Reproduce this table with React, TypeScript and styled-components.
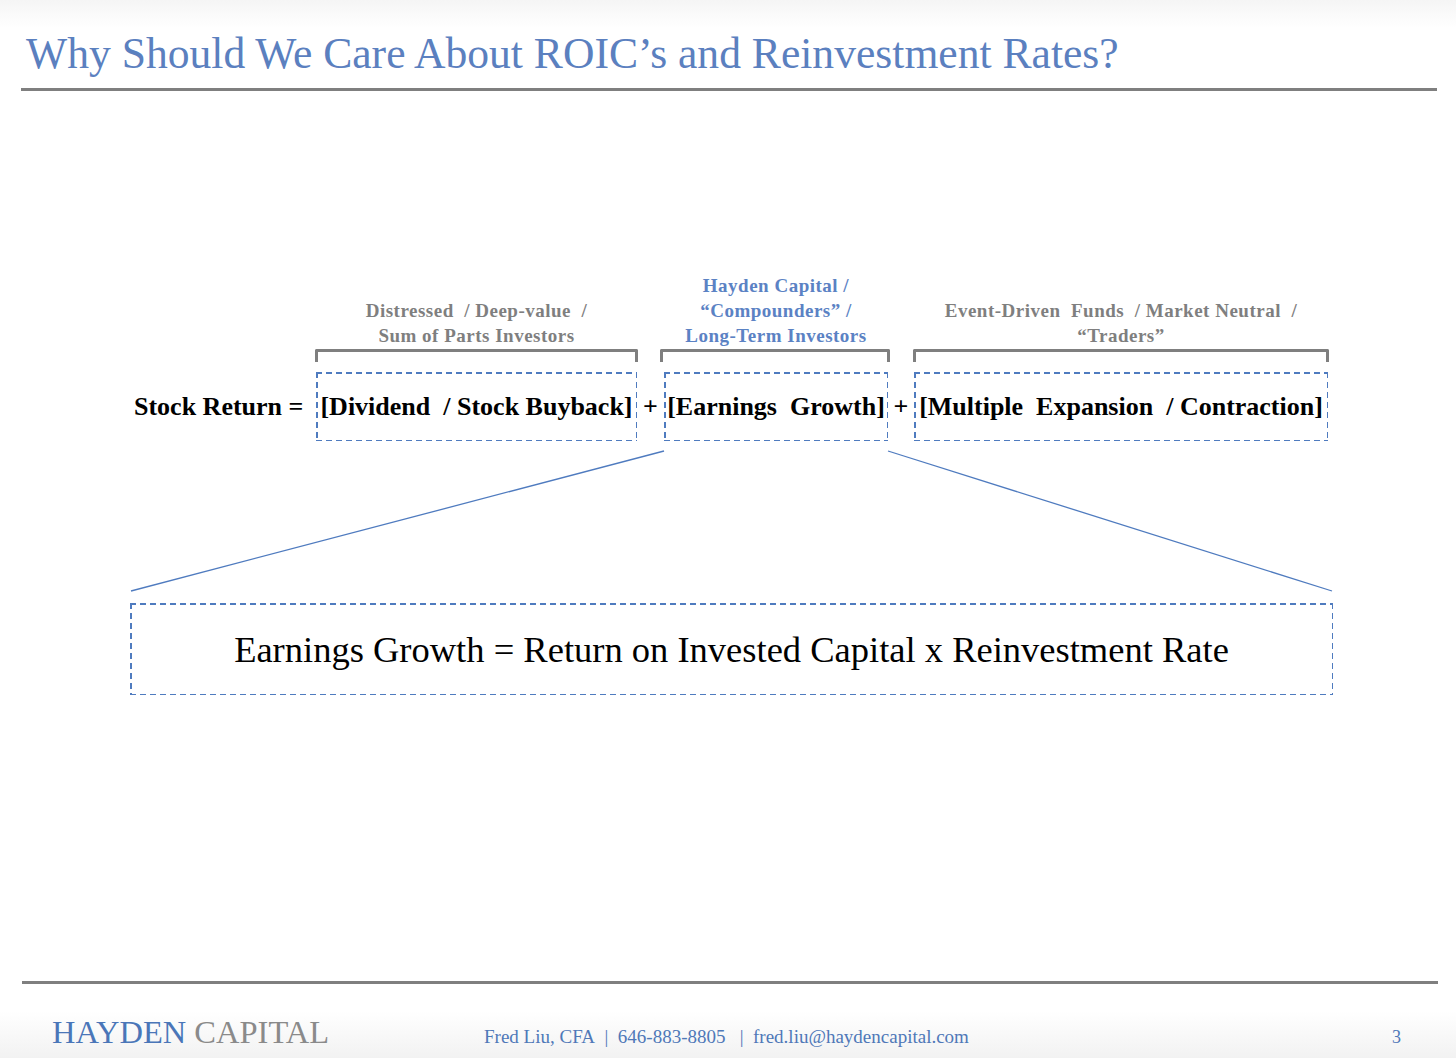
import React from 'react';
import styled, {createGlobalStyle, css} from 'styled-components';

const blue = '#5b80bf';
const dashBlue = '#4f7bbf';
const gray = '#7f7f7f';
const serif = `"Liberation Serif", "Times New Roman", serif`;

const GlobalStyle = createGlobalStyle`
  html, body {
    margin: 0;
    padding: 0;
    background: #fff;
  }
  body {
    font-family: ${serif};
    color: #000;
  }
`;

const dashed = css`
  background:
    linear-gradient(to right, ${dashBlue} 60%, transparent 0) top left / 10px 1.5px repeat-x,
    linear-gradient(to right, ${dashBlue} 60%, transparent 0) bottom left / 10px 1.5px repeat-x,
    linear-gradient(to bottom, ${dashBlue} 60%, transparent 0) top left / 1.5px 10px repeat-y,
    linear-gradient(to bottom, ${dashBlue} 60%, transparent 0) top right / 1.5px 10px repeat-y;
`;

function App() {
    return (
        <Page>
            <GlobalStyle/>
            <Header>
                <Title>Why Should We Care About ROIC’s and Reinvestment Rates?</Title>
                <Rule/>
            </Header>
            <Main>
                <Diagram>
                    <Label $col={2} $blue={false}>Distressed&nbsp; / Deep-value&nbsp; /<br/>Sum of Parts Investors</Label>
                    <Label $col={4} $blue>Hayden Capital /<br/>“Compounders” /<br/>Long-Term Investors</Label>
                    <Label $col={6} $blue={false}>Event-Driven&nbsp; Funds&nbsp; / Market Neutral&nbsp; /<br/>“Traders”</Label>

                    <Bracket $col={2}/>
                    <Bracket $col={4} $wide/>
                    <Bracket $col={6}/>

                    <Lead>Stock Return =</Lead>
                    <Term $col={2}>[Dividend&nbsp; / Stock Buyback]</Term>
                    <Plus $col={3}>+</Plus>
                    <Term $col={4}>[Earnings&nbsp; Growth]</Term>
                    <Plus $col={5}>+</Plus>
                    <Term $col={6}>[Multiple&nbsp; Expansion&nbsp; / Contraction]</Term>
                </Diagram>
                <Connector viewBox="0 0 1456 162" width="1456" height="162">
                    <line x1="664" y1="10" x2="131" y2="150" stroke={dashBlue} strokeWidth="1.3"/>
                    <line x1="888" y1="10" x2="1332" y2="150" stroke={dashBlue} strokeWidth="1.3"/>
                </Connector>
                <Formula>Earnings Growth = Return on Invested Capital x Reinvestment Rate</Formula>
            </Main>
            <Footer>
                <Rule/>
                <FooterRow>
                    <Logo><LogoBlue>HAYDEN</LogoBlue> <LogoGray>CAPITAL</LogoGray></Logo>
                    <Contact>Fred Liu, CFA&nbsp; |&nbsp; 646-883-8805&nbsp;&nbsp; |&nbsp; fred.liu@haydencapital.com</Contact>
                    <PageNum>3</PageNum>
                </FooterRow>
            </Footer>
        </Page>
    );
}

export default App;

const Page = styled.div`
  width: 1456px;
  height: 1058px;
  display: flex;
  flex-direction: column;
  overflow: hidden;
  background: linear-gradient(#f5f5f5, #fff 28px);
`

const Header = styled.header`
  padding: 31px 19px 0 21px;
`

const Title = styled.h1`
  margin: 0 0 13px 5px;
  font-family: ${serif};
  font-weight: 400;
  font-size: 43.6px;
  line-height: 44px;
  color: ${blue};
  white-space: nowrap;
`

const Rule = styled.div`
  height: 3px;
  background: ${gray};
`

const Main = styled.main`
  flex: 1;
  padding-top: 182px;
  display: flex;
  flex-direction: column;
`

const Diagram = styled.div`
  margin-left: 134px;
  display: grid;
  grid-template-columns: 182px 321px 27px 224px 26px 414px;
  grid-template-rows: auto 13px 79px;
`

const Label = styled.div<{ $col: number; $blue: boolean }>`
  grid-column: ${p => p.$col};
  grid-row: 1;
  align-self: end;
  margin: 0 -80px 1px;
  text-align: center;
  font-size: 19px;
  font-weight: 700;
  letter-spacing: 0.5px;
  line-height: 25px;
  color: ${p => (p.$blue ? '#5b82c4' : gray)};
  white-space: nowrap;
`

const Bracket = styled.div<{ $col: number; $wide?: boolean }>`
  grid-column: ${p => p.$col};
  grid-row: 2;
  margin: ${p => (p.$wide ? '0 -2px 0 -4px' : '0 -1px')};
  border: 3px solid ${gray};
  border-bottom: none;
  border-radius: 2px 2px 0 0;
`

const Lead = styled.div`
  grid-column: 1;
  grid-row: 3;
  margin-top: 10px;
  display: flex;
  align-items: center;
  font-size: 26px;
  font-weight: 700;
  white-space: nowrap;
`

const Term = styled.div<{ $col: number }>`
  grid-column: ${p => p.$col};
  grid-row: 3;
  margin-top: 10px;
  display: flex;
  align-items: center;
  justify-content: center;
  font-size: 26px;
  font-weight: 700;
  white-space: nowrap;
  ${dashed};
`

const Plus = styled.div<{ $col: number }>`
  grid-column: ${p => p.$col};
  grid-row: 3;
  margin-top: 10px;
  display: flex;
  align-items: center;
  justify-content: center;
  font-size: 26px;
  font-weight: 700;
`

const Connector = styled.svg`
  display: block;
`

const Formula = styled.div`
  margin-left: 130px;
  width: 1203px;
  height: 92px;
  display: flex;
  align-items: center;
  justify-content: center;
  font-size: 36.5px;
  white-space: nowrap;
  ${dashed};
`

const Footer = styled.footer`
  height: 77px;
  padding: 0 18px 0 22px;
  background: linear-gradient(#fff 30px, #f2f2f2);
`

const FooterRow = styled.div`
  display: grid;
  grid-template-columns: 432px 913px auto;
  align-items: baseline;
  padding: 30px 0 0 30px;
`

const Logo = styled.div`
  font-size: 32.5px;
  line-height: 36px;
  white-space: nowrap;
`

const LogoBlue = styled.span`
  color: #4a76b8;
`

const LogoGray = styled.span`
  color: #8a8a8a;
`

const Contact = styled.div`
  font-size: 19px;
  color: #4f78b8;
  white-space: nowrap;
`

const PageNum = styled.div`
  font-size: 18px;
  color: #4f78b8;
  transform: translateX(-5px);
`
